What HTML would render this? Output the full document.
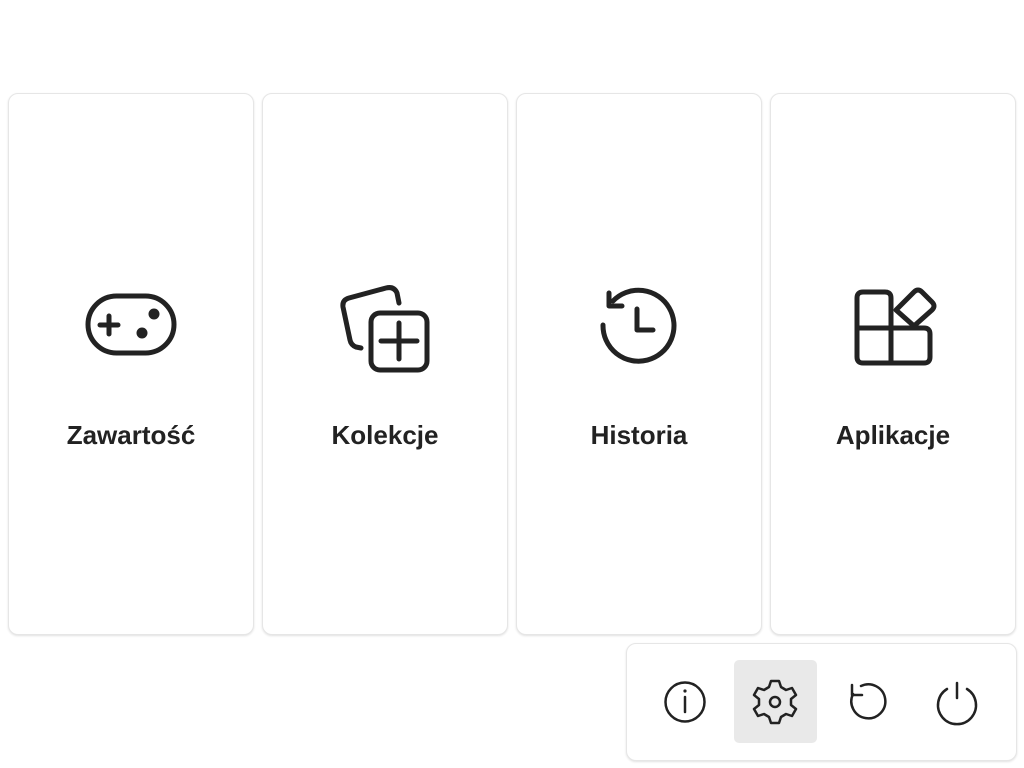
<!DOCTYPE html>
<html><head><meta charset="utf-8"><style>
html,body{margin:0;padding:0;background:#fff;width:1024px;height:768px;overflow:hidden;position:relative;font-family:"Liberation Sans",sans-serif}
.card{position:absolute;top:93px;width:244px;height:540px;border:1px solid #e6e6e6;border-radius:10px;box-shadow:0 1px 2px rgba(0,0,0,0.12);background:#fff}
.lbl{position:absolute;top:326px;left:0;width:100%;text-align:center;font-weight:bold;font-size:26px;line-height:30px;color:#222}
svg{position:absolute;overflow:visible}
.panel{position:absolute;left:626px;top:643px;width:389px;height:116px;border:1px solid #e6e6e6;border-radius:10px;box-shadow:0 1px 2px rgba(0,0,0,0.12);background:#fff}
</style></head><body>
<div class="card" style="left:8px"><div class="lbl">Zawartość</div></div>
<div class="card" style="left:262px"><div class="lbl">Kolekcje</div></div>
<div class="card" style="left:516px"><div class="lbl">Historia</div></div>
<div class="card" style="left:770px"><div class="lbl">Aplikacje</div></div>
<svg width="1024" height="768" style="left:0;top:0" fill="none" stroke="#222" stroke-width="5" stroke-linecap="round" stroke-linejoin="round">
<rect x="88" y="296" width="86" height="57" rx="28.5"/>
<path d="M100 325h18M109 316v18"/>
<circle cx="154" cy="314" r="3" fill="#222"/>
<circle cx="142" cy="333" r="3" fill="#222"/>
<path d="M361 348 L356 347 Q351 345 350 340 L343 307 Q342 300 349 298 L386 288 Q394 286 397 293 L399 303"/>
<rect x="371" y="313" width="56" height="57" rx="9"/>
<path d="M381 341h36M399 323v36"/>
<path d="M603 325 A35.5 35.5 0 1 0 613 301"/>
<path d="M609 293 L609 306 L622 306"/>
<path d="M637 309 V330 H653"/>
<path d="M857 328 V298 Q857 292 863 292 H885 Q891 292 891 298 V328 Z"/>
<path d="M857 328 H924 Q930 328 930 334 V357 Q930 363 924 363 H863 Q857 363 857 357 Z"/>
<path d="M891 328 V363"/>
<path d="M896 310 L914 292 Q918 288 922 292 L932 302 Q936 306 932 310 L914 326 Z"/>
</svg>
<div class="panel"></div>
<div style="position:absolute;left:734px;top:660px;width:83px;height:83px;background:#e9e9e9;border-radius:5px"></div>
<svg width="1024" height="768" style="left:0;top:0" fill="none" stroke="#222" stroke-width="2.5" stroke-linecap="round" stroke-linejoin="round">
<circle cx="685" cy="702" r="19.5"/>
<path d="M685 697v15"/><circle cx="685" cy="691" r="1.6" fill="#222" stroke="none"/>
<path d="M771 681h8l2 6 5 3 6-2 4 7-5 4v6l5 4-4 7-6-2-5 3-2 6h-8l-2-6-5-3-6 2-4-7 5-4v-6l-5-4 4-7 6 2 5-3z"/>
<circle cx="775" cy="702" r="5"/>
<path d="M853 694 A17 17 0 1 0 861 686"/>
<path d="M852 685 L852 695 L862 695"/>
<path d="M957 683v15"/>
<path d="M947 689 A19 19 0 1 0 967 689"/>
</svg>
</body></html>
